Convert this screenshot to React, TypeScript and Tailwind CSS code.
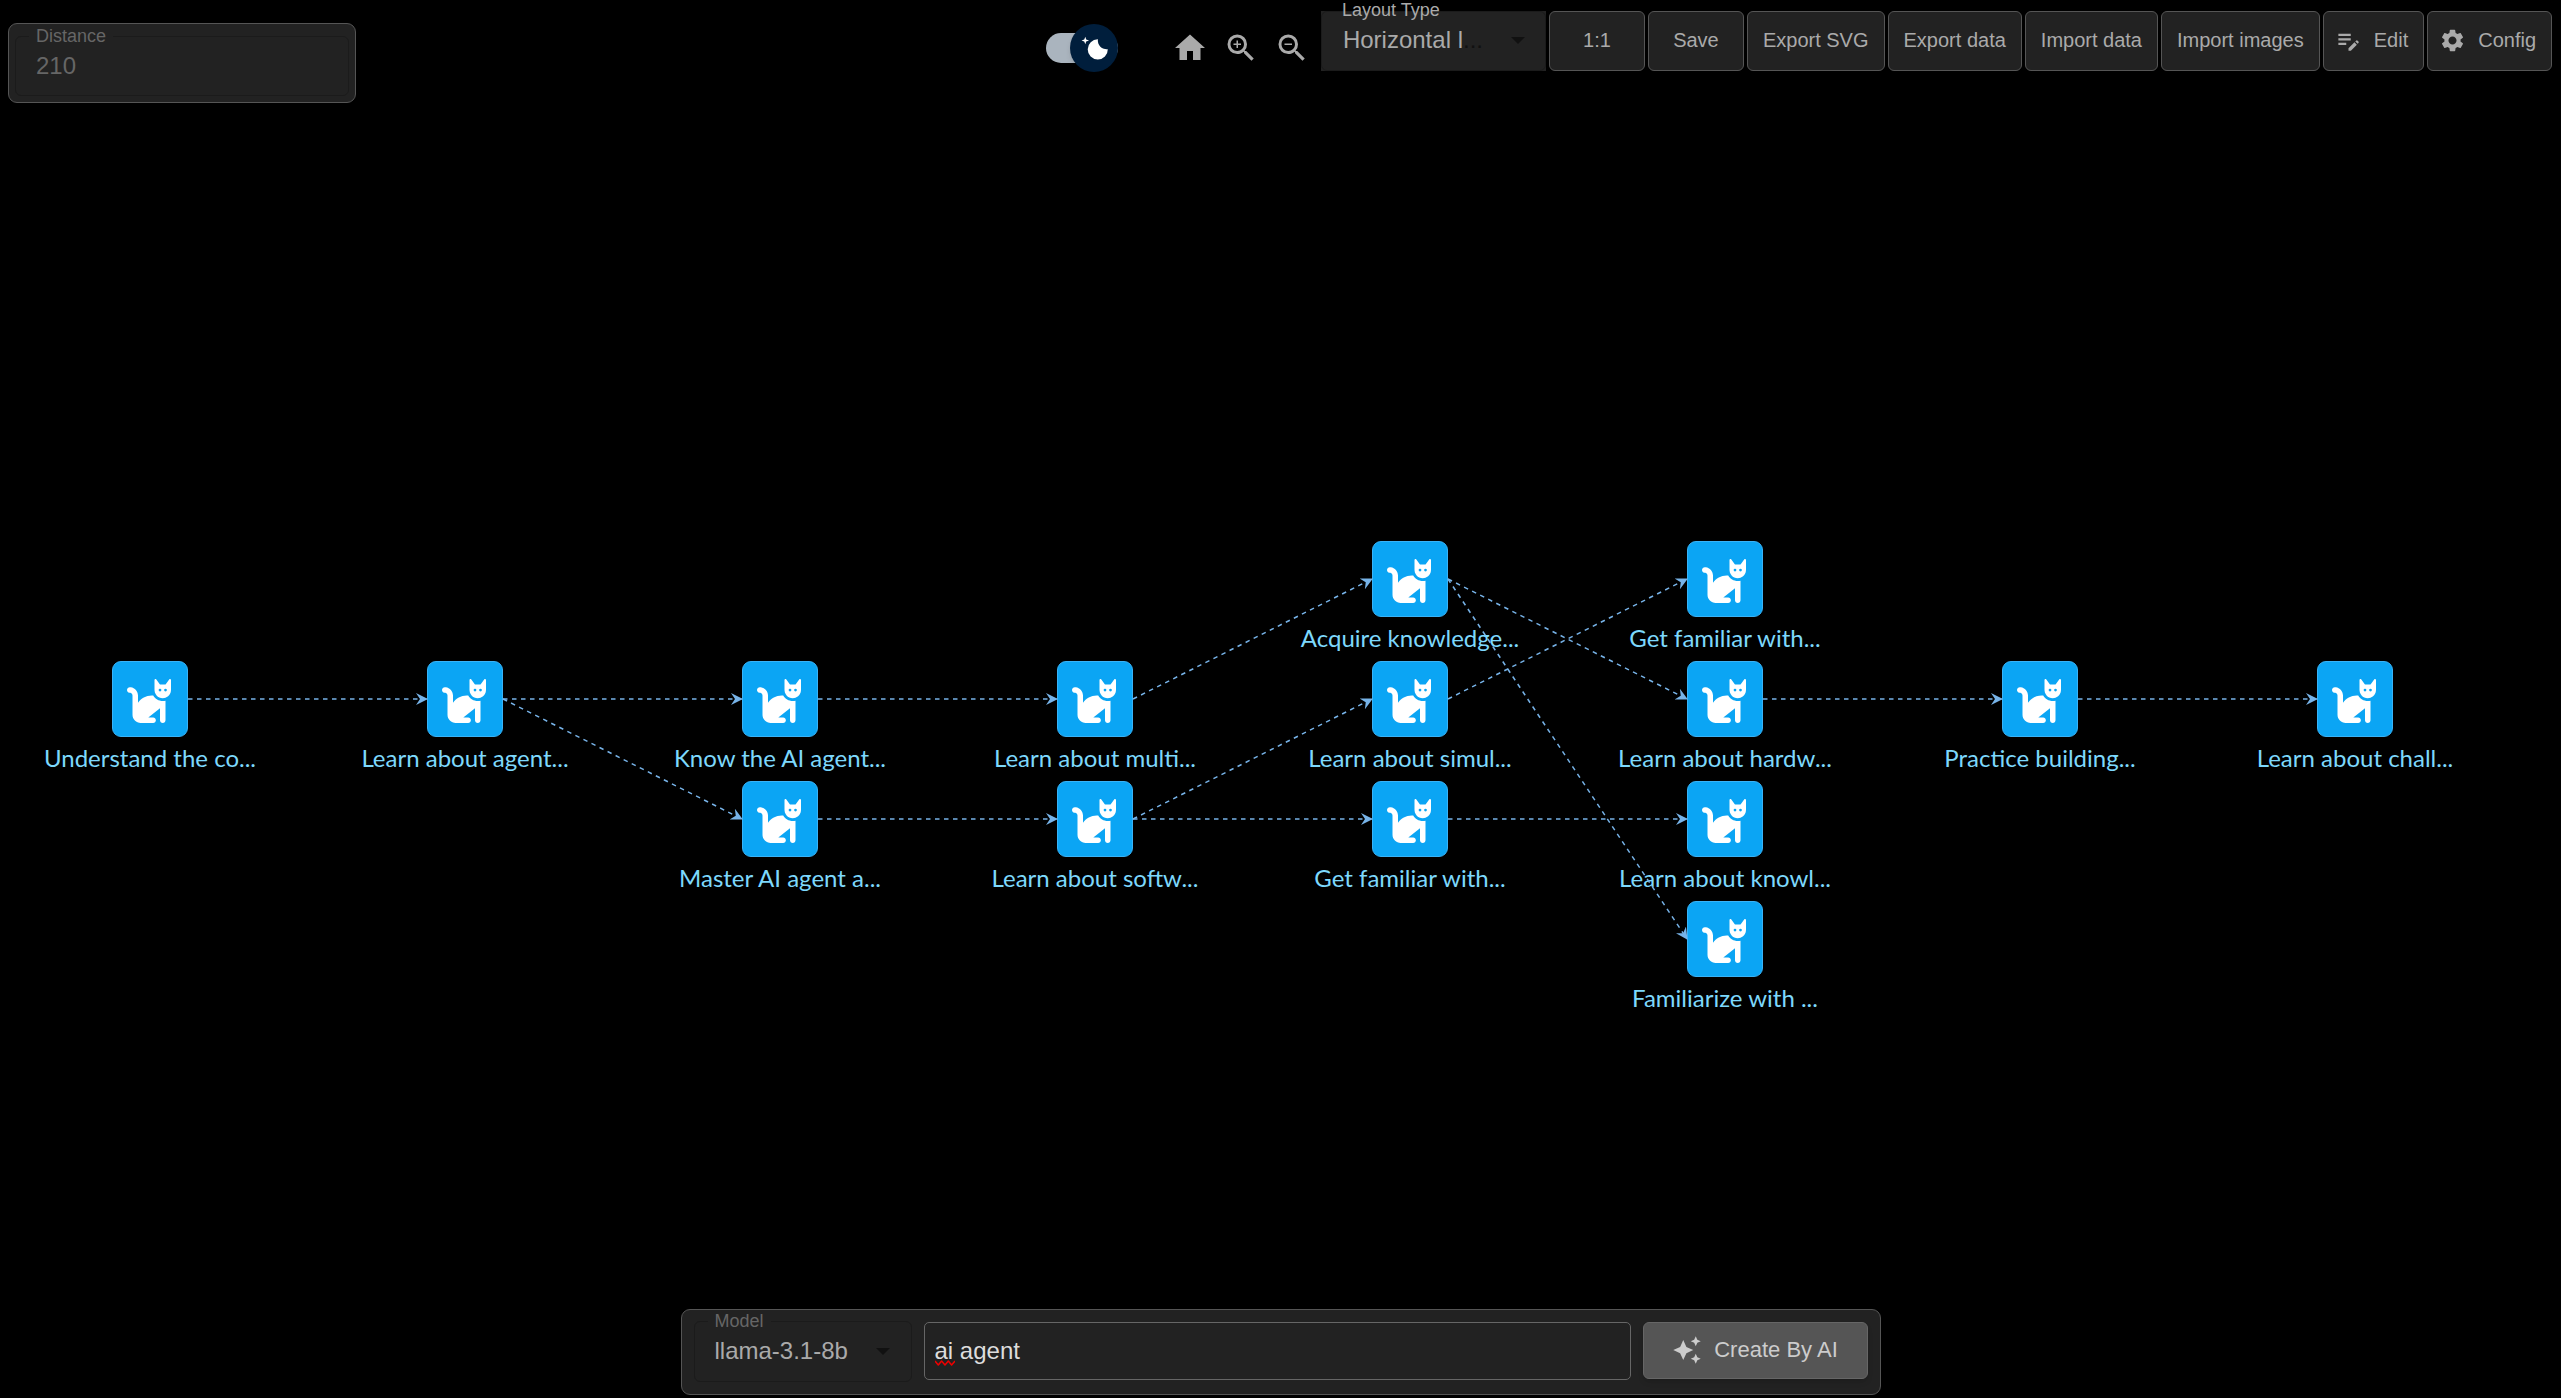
import React from "react";
import { MdHome, MdZoomIn, MdZoomOut, MdEditNote, MdSettings, MdAutoAwesome } from "react-icons/md";
import { FaCat } from "react-icons/fa6";

const NODE = 76;

const nodes = [
  { id: "a", x: 150, y: 699, label: "Understand the co..." },
  { id: "b", x: 465, y: 699, label: "Learn about agent..." },
  { id: "c1", x: 780, y: 699, label: "Know the AI agent..." },
  { id: "c2", x: 780, y: 819, label: "Master AI agent a..." },
  { id: "d1", x: 1095, y: 699, label: "Learn about multi..." },
  { id: "d2", x: 1095, y: 819, label: "Learn about softw..." },
  { id: "e1", x: 1410, y: 579, label: "Acquire knowledge..." },
  { id: "e2", x: 1410, y: 699, label: "Learn about simul..." },
  { id: "e3", x: 1410, y: 819, label: "Get familiar with..." },
  { id: "f1", x: 1725, y: 579, label: "Get familiar with..." },
  { id: "f2", x: 1725, y: 699, label: "Learn about hardw..." },
  { id: "f3", x: 1725, y: 819, label: "Learn about knowl..." },
  { id: "f4", x: 1725, y: 939, label: "Familiarize with ..." },
  { id: "g", x: 2040, y: 699, label: "Practice building..." },
  { id: "h", x: 2355, y: 699, label: "Learn about chall..." },
];

const edges: [string, string][] = [
  ["a", "b"], ["b", "c1"], ["b", "c2"], ["c1", "d1"], ["c2", "d2"],
  ["d1", "e1"], ["d2", "e2"], ["d2", "e3"], ["e1", "f2"], ["e1", "f4"],
  ["e2", "f1"], ["e3", "f3"], ["f2", "g"], ["g", "h"],
];

const byId = Object.fromEntries(nodes.map((n) => [n.id, n]));

function Graph() {
  return (
    <div className="absolute inset-0 overflow-hidden">
      {nodes.map((n) => (
        <div
          key={n.id}
          className="absolute flex w-60 -translate-x-1/2 flex-col items-center"
          style={{ left: n.x, top: n.y - NODE / 2 }}
        >
          <div className="flex size-[76px] items-center justify-center rounded-[9px] border border-[#38b3f8] bg-[#0ba5f4] pt-1 pr-0.5 text-white">
            <FaCat className="h-11 w-[50px]" />
          </div>
          <span className="mt-[5px] text-2xl leading-8 whitespace-nowrap text-[#7dd8fc] font-['Lato',sans-serif]">{n.label}</span>
        </div>
      ))}
      <svg className="pointer-events-none absolute inset-0 size-full" aria-hidden="true">
        <defs>
          <marker id="vee" viewBox="0 0 12 12" refX="11" refY="6" markerWidth="12" markerHeight="12" markerUnits="userSpaceOnUse" orient="auto">
            <path d="M0 0 L12 6 L0 12 L4 6 Z" fill="#77b3e8" />
          </marker>
        </defs>
        {edges.map(([s, t]) => (
          <line
            key={s + t}
            x1={byId[s].x + NODE / 2}
            y1={byId[s].y}
            x2={byId[t].x - NODE / 2}
            y2={byId[t].y}
            stroke="#77b3e8"
            strokeWidth="1.5"
            strokeDasharray="4.5 4.5"
            markerEnd="url(#vee)"
          />
        ))}
      </svg>
    </div>
  );
}

function ThemeSwitch() {
  return (
    <label className="relative flex h-12 w-[72px] cursor-pointer items-center">
      <input type="checkbox" role="switch" defaultChecked aria-label="Dark mode" className="absolute inset-0 opacity-0" />
      <span className="h-[30px] w-full rounded-full bg-[#aab4be]" />
      <span className="absolute right-0 flex size-12 items-center justify-center rounded-full bg-[#001e3c] shadow-md">
        <svg viewBox="0 0 20 20" className="size-[30px]" fill="#fff" aria-hidden="true">
          <path d="M4.2 2.5l-.7 1.8-1.8.7 1.8.7.7 1.8.6-1.8L6.7 5l-1.9-.7-.6-1.8zm15 8.3a6.7 6.7 0 11-6.6-6.6 5.8 5.8 0 006.6 6.6z" />
        </svg>
      </span>
    </label>
  );
}

function ToolButton({ children, icon }: { children: React.ReactNode; icon?: React.ReactNode }) {
  return (
    <button
      type="button"
      className="flex h-[60px] min-w-24 items-center justify-center gap-3 rounded-md border border-[#555] bg-[#222] px-[15px] pb-0.5 text-xl whitespace-nowrap text-[#aaa]"
    >
      {icon && <span className="-ml-1 text-[27px]">{icon}</span>}
      {children}
    </button>
  );
}

function Caret() {
  return (
    <svg aria-hidden="true" viewBox="0 0 14 7" className="pointer-events-none h-[7px] w-3.5 shrink-0" fill="#111">
      <path d="M0 0h14l-7 7z" />
    </svg>
  );
}

export default function App() {
  return (
    <main className="relative flex min-h-screen flex-col justify-between bg-black font-['Liberation_Sans',Arial,sans-serif]">
      <Graph />

      <header className="relative flex items-start justify-between pr-[9px] pl-2">
        <div className="mt-[23px] w-[348px] rounded-[9px] border border-[#555] bg-[#222] px-1.5 pt-px pb-1.5">
          <fieldset className="h-[71px] min-w-0 rounded-md border border-[#1b1b1b] px-[13px]">
            <legend className="px-[7px] text-lg leading-[22px] text-[#666]">
              <label htmlFor="distance">Distance</label>
            </legend>
            <input id="distance" defaultValue="210" className="mt-[3px] block w-full bg-transparent pl-[7px] text-2xl text-[#666] outline-none" />
          </fieldset>
        </div>

        <div className="flex items-start">
          <div className="mt-6 mr-[54px]">
            <ThemeSwitch />
          </div>
          <div className="mt-[30px] mr-[11px] flex gap-[15px] text-4xl text-[#aaa]">
            <button type="button" aria-label="Home"><MdHome /></button>
            <button type="button" aria-label="Zoom in"><MdZoomIn /></button>
            <button type="button" aria-label="Zoom out"><MdZoomOut /></button>
          </div>
          <div className="mt-[11px] flex gap-[3px]">
            <div className="relative h-[60px] w-[225px] bg-[#222]">
              <label htmlFor="layout-type" className="absolute -top-3 left-[21px] text-lg leading-[22px] whitespace-nowrap text-[#aaa]">Layout Type</label>
              <div aria-hidden="true" className="flex size-full items-center justify-between rounded-md border border-[#1b1b1b] pr-5 pb-0.5 pl-[21px] text-2xl whitespace-nowrap text-[#111]">
                <span><span className="text-[#aaa]">Horizontal l</span>...</span>
                <Caret />
              </div>
              <select id="layout-type" className="absolute inset-0 size-full opacity-0">
                <option>Horizontal l...</option>
              </select>
            </div>
            <ToolButton>1:1</ToolButton>
            <ToolButton>Save</ToolButton>
            <ToolButton>Export SVG</ToolButton>
            <ToolButton>Export data</ToolButton>
            <ToolButton>Import data</ToolButton>
            <ToolButton>Import images</ToolButton>
            <ToolButton icon={<MdEditNote />}>Edit</ToolButton>
            <ToolButton icon={<MdSettings />}>Config</ToolButton>
          </div>
        </div>
      </header>

      <form
        onSubmit={(e) => e.preventDefault()}
        className="relative mx-auto mb-[3px] flex h-[86px] w-full max-w-[1200px] items-start gap-3 rounded-[9px] border border-[#555] bg-[#222] px-3"
      >
        <fieldset className="h-[72px] w-[218px] min-w-0 shrink-0 rounded-md border border-[#1b1b1b] px-[13px]">
          <legend className="px-[7px] text-lg leading-[22px] text-[#666]">
            <label htmlFor="model">Model</label>
          </legend>
          <div className="mt-[3px] flex items-center pr-2">
            <select id="model" className="block min-w-0 flex-1 appearance-none bg-transparent pl-[7px] text-2xl text-[#aaa] outline-none">
              <option>llama-3.1-8b</option>
            </select>
            <Caret />
          </div>
        </fieldset>
        <div className="relative mt-3 h-[58px] flex-1">
          <input aria-label="Prompt" defaultValue="ai agent" spellCheck={false} className="size-full rounded-[5px] border border-[#666] bg-[#222] px-2.5 text-2xl text-[#ddd] outline-none" />
          <svg aria-hidden="true" viewBox="0 0 20 6" className="pointer-events-none absolute top-[38px] left-[11px] h-1.5 w-5" fill="none" stroke="#e00" strokeWidth="1.5">
            <path d="M0 1L3.3 5L6.6 1L10 5L13.3 1L16.6 5L20 1" strokeLinejoin="round" />
          </svg>
        </div>
        <button type="submit" className="mt-3 flex h-[57px] w-[225px] items-center justify-center gap-3 rounded-md border border-[#666] bg-[#555] pb-0.5 text-[22px] text-[#ccc] shadow-md">
          <MdAutoAwesome className="size-[30px]" />
          Create By AI
        </button>
      </form>
    </main>
  );
}
